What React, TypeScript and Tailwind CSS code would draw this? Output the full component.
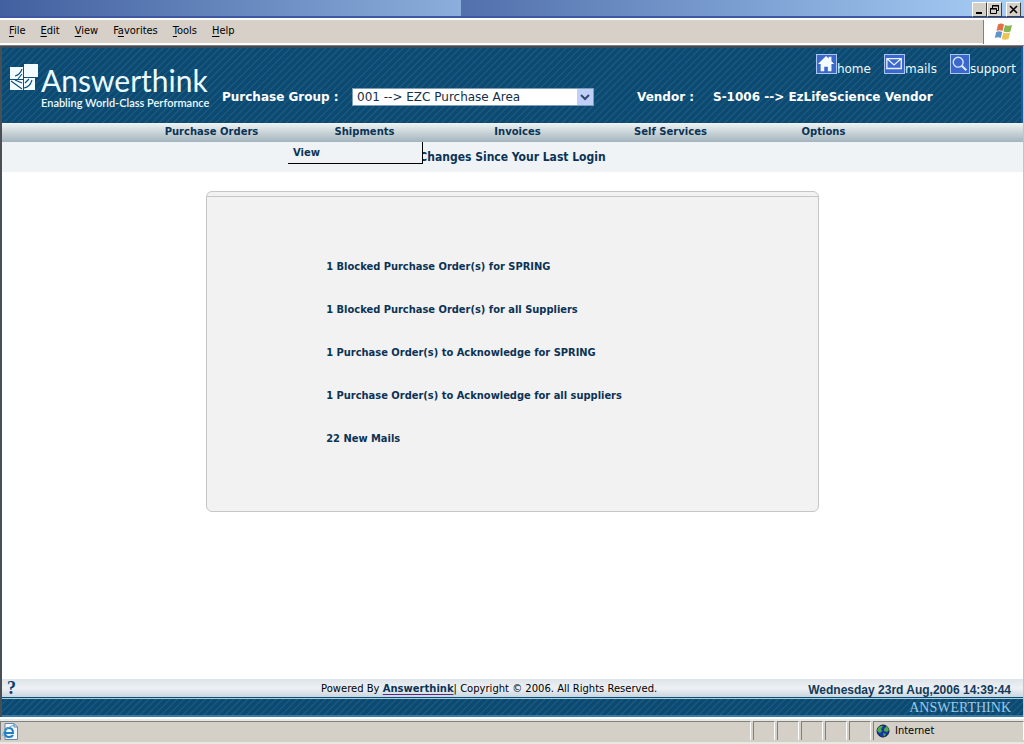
import React from "react";

const menuItems = [
  { pre: "", key: "F", post: "ile" },
  { pre: "", key: "E", post: "dit" },
  { pre: "", key: "V", post: "iew" },
  { pre: "F", key: "a", post: "vorites" },
  { pre: "", key: "T", post: "ools" },
  { pre: "", key: "H", post: "elp" },
];

const notices = [
  "1 Blocked Purchase Order(s) for SPRING",
  "1 Blocked Purchase Order(s) for all Suppliers",
  "1 Purchase Order(s) to Acknowledge for SPRING",
  "1 Purchase Order(s) to Acknowledge for all suppliers",
  "22 New Mails",
];

const hatch =
  "bg-[#0d4b73] bg-[repeating-linear-gradient(135deg,#0c4a73_0px,#0c4a73_3px,#1d5f80_4px,#0c4a73_5px)]";
const verdana = "font-['DejaVu_Sans',sans-serif]";
const tahoma = "font-['DejaVu_Sans_Condensed','DejaVu_Sans',sans-serif]";

function TitleBar() {
  const button =
    "flex h-[15px] w-[15px] items-center justify-center border border-t-white border-l-white border-r-[#404040] border-b-[#404040] bg-[#d4d0c8]";
  return (
    <div className="flex h-[18px] border-b-2 border-[#3d58a0] bg-gradient-to-r from-[#22398b] to-[#a9d0f7]">
      <div className="w-[45%] bg-gradient-to-r from-[#42609f] to-[#8caedb]" />
      <div className="flex flex-1 items-start justify-end bg-gradient-to-r from-[#5270ac] to-[#a9d0f7] pt-[2px] pr-[3px]">
        <button aria-label="Minimize" className={button}>
          <svg width="11" height="11"><path d="M2 9h6" stroke="#000" strokeWidth="2" /></svg>
        </button>
        <button aria-label="Restore" className={button}>
          <svg width="11" height="11" fill="none" stroke="#000">
            <path d="M3.500 4V1.500H9.500V6.500H8M3 2h7M1.500 4.500h6v5h-6zM1 5h7" />
          </svg>
        </button>
        <button aria-label="Close" className={button + " ml-[4px]"}>
          <svg width="11" height="11"><path d="M2 2l7 7M9 2l-7 7" stroke="#000" strokeWidth="1.600" /></svg>
        </button>
      </div>
    </div>
  );
}

function WindowsFlag() {
  return (
    <svg width="22" height="20" viewBox="0 0 22 20">
      <path d="M5 2.500Q8 .5 11 2.500L9.500 9Q6.500 7.500 3.500 9Z" fill="#e07048" />
      <path d="M12 3Q15 4.500 19 3L17.500 9.500Q14 11 10.500 9.500Z" fill="#86b552" />
      <path d="M3.200 10Q6 8.500 9.200 10L7.800 16Q5 14.500 1.800 16Z" fill="#5f93cc" />
      <path d="M10.200 10.500Q13.500 12 17.200 10.500L15.500 17Q12 18.500 8.800 17Z" fill="#ecc552" />
    </svg>
  );
}

function MenuBar() {
  return (
    <div className="flex h-[28px] items-stretch border-t-2 border-b border-t-white border-b-[#808080] bg-[#d6d0c8] shadow-[inset_0_-2px_0_#fff]">
      <nav className="flex flex-1 items-center gap-[15px] pb-[2px] pl-[9px] text-[11px] text-black">
        {menuItems.map((m) => (
          <button key={m.key} className={tahoma}>
            {m.pre}
            <span className="underline underline-offset-2">{m.key}</span>
            {m.post}
          </button>
        ))}
      </nav>
      <div className="mb-[1px] flex w-[41px] items-center justify-center border-l border-[#808080] bg-white">
        <WindowsFlag />
      </div>
    </div>
  );
}

function Logo() {
  return (
    <div className="flex w-[220px] shrink-0 items-start gap-[2px] pt-[16px] pl-[7px] font-['Lato',sans-serif] text-[#eafaff]">
      <svg width="30" height="28" viewBox="0 0 30 28" className="shrink-0">
        <path d="M15 0h14v13H15zM1 3h13v12H1zM1 16h13v10H1zM15 14h11v12H15z" fill="#f2fcff" />
        <path
          d="M6 12q5-1 7-7M9 15l4-5M2 17l11 8M6 16l7 3M15 24q6-1 8-8M16 19l4-4"
          fill="none"
          stroke="#0c4c75"
          strokeWidth="1.100"
        />
      </svg>
      <div>
        <div className="text-[30px] leading-[32px]">Answerthink</div>
        <div className="text-[11px] leading-[14px] font-semibold whitespace-nowrap">Enabling World-Class Performance</div>
      </div>
    </div>
  );
}

const iconFrame = "border border-[#a9c6f2] bg-[#3c68cc]";

function QuickLinks() {
  const link = "flex items-start";
  const text = "pt-[7px] text-[12px] leading-[16px]";
  return (
    <nav className={"flex justify-end gap-[13px] pt-[6px] pr-[5px] text-[#eef9fb] " + verdana}>
      <a href="#home" className={link}>
        <svg width="21" height="20" viewBox="0 0 21 20" className={iconFrame}>
          <path d="M10 1L1 10h3v8h4v-5h4v5h4v-8h3L16 7V2h-3v2z" fill="#f4fbff" />
        </svg>
        <span className={text}>home</span>
      </a>
      <a href="#mails" className={link}>
        <svg width="21" height="20" viewBox="0 0 21 20" className={iconFrame} fill="none" stroke="#e6f2ff" strokeWidth="1.500">
          <path d="M2 4h16v11H2zM2 4l8 7 8-7" />
        </svg>
        <span className={text}>mails</span>
      </a>
      <a href="#support" className={link}>
        <svg width="20" height="20" viewBox="0 0 20 20" className={iconFrame} fill="none" stroke="#d4e7ff" strokeWidth="1.500">
          <circle cx="8" cy="8" r="5.500" />
          <path d="M12 12l5 5" strokeWidth="2.500" />
        </svg>
        <span className={text}>support</span>
      </a>
    </nav>
  );
}

function Header() {
  return (
    <header className={"flex h-[77px] border-t-2 border-r-2 border-t-[#3e4a55] border-r-[#1c5aa0] text-white " + hatch}>
      <Logo />
      <div className="flex flex-1 flex-col">
        <QuickLinks />
        <div className={"mt-[11px] flex items-center text-[12px] font-bold whitespace-nowrap " + verdana}>
          <label htmlFor="group" className="w-[130px]">Purchase Group :</label>
          <div className="relative w-[242px]">
            <select
              id="group"
              className="block h-[18px] w-full appearance-none border border-[#7f9db9] bg-white pl-1 text-[12px] leading-[16px] font-normal text-[#12304a]"
            >
              <option>001 --&gt; EZC Purchase Area</option>
            </select>
            <svg width="16" height="16" className="pointer-events-none absolute top-[1px] right-[1px] bg-[#bfd0f8]">
              <path d="M4 6l4 4 4-4" fill="none" stroke="#35466f" strokeWidth="2" />
            </svg>
          </div>
          <span className="ml-[43px] w-[76px]">Vendor :</span>
          <span>S-1006 --&gt; EzLifeScience Vendor</span>
        </div>
      </div>
    </header>
  );
}

function MainNav() {
  const item = "flex-1 text-center";
  return (
    <nav
      className={
        "flex h-[19px] items-center bg-gradient-to-b from-[#f0f4f2] to-[#a3b4be] pr-[123px] pb-[2px] pl-[133px] text-[10px] leading-[15px] font-bold text-[#0b3355] " +
        verdana
      }
    >
      <a href="#orders" className={item}>Purchase Orders</a>
      <div className={"relative " + item}>
        <a href="#shipments">Shipments</a>
        <div className="absolute top-[18px] left-0 z-10 flex h-[22px] w-[135px] items-center border-r border-b border-black bg-[#eff3f5] pl-[5px]">
          <a href="#view">View</a>
        </div>
      </div>
      <a href="#invoices" className={item}>Invoices</a>
      <a href="#self" className={item}>Self Services</a>
      <a href="#options" className={item}>Options</a>
    </nav>
  );
}

function Footer() {
  return (
    <footer>
      <div
        className={
          "flex h-[19px] items-center justify-between border-b border-[#0d4b73] bg-gradient-to-b from-[#dde3e9] via-[#edf1f4] to-[#cbd6df] text-[10px] whitespace-nowrap text-black " +
          verdana
        }
      >
        <a href="#help" className="w-[168px] pl-[5px] font-['Liberation_Serif',serif] text-[18px] leading-[18px] font-bold text-[#0b3f68]">?</a>
        <p>
          Powered By <a href="#answerthink" className="font-bold text-[#0b3355] underline decoration-[#5a2a80] underline-offset-2">Answerthink</a>| Copyright © 2006. All Rights Reserved.
        </p>
        <time className="pt-[3px] pr-[12px] text-right font-['Liberation_Sans',sans-serif] text-[12px] font-bold text-[#123a5a]">
          Wednesday 23rd Aug,2006 14:39:44
        </time>
      </div>
      <div
        className={
          "h-[19px] border-t border-b-2 border-t-[#a6cfe0] border-b-[#3c7ba6] pr-[12px] text-right font-['Liberation_Serif',serif] text-[14px] leading-[17px] text-[#9cc9e6] " +
          hatch
        }
      >
        ANSWERTHINK
      </div>
    </footer>
  );
}

function StatusBar() {
  const cell = "border-t border-l border-[#808080] border-r-white border-r";
  return (
    <div className="mt-[2px] flex h-[25px] gap-[2px] border-t-2 border-b-2 border-[#e9e7e2] bg-[#d4d0c8] pb-[2px]">
      <div className={"flex flex-1 items-center pl-[1px] " + cell}>
        <svg width="16" height="17" viewBox="0 0 16 17">
          <path d="M3 .5h9l3.500 3.500v12.500H3z" fill="#f4f9ff" stroke="#6785b5" />
          <path d="M12 .5V4h3.500" fill="none" stroke="#6785b5" />
          <path d="M3 10h8q0-5-4-5t-4 4.500T7 14q3 0 4-2" fill="none" stroke="#1f7fc0" strokeWidth="2" />
          <path d="M1 13Q0 9 6 5t7-2" fill="none" stroke="#55a8dc" />
        </svg>
      </div>
      {[0, 1, 2, 3, 4].map((n) => (
        <div key={n} className={"w-[22px] " + cell} />
      ))}
      <div className={"flex w-[151px] items-center gap-[5px] pl-[2px] text-[11px] text-black " + cell + " " + tahoma}>
        <svg width="14" height="14" viewBox="0 0 14 14">
          <circle cx="7" cy="7" r="6" fill="#1736a5" stroke="#111a3c" />
          <path d="M2 4q2-3 5-2L5 5l1 2-2 2-3-2zM8 5l3-3 2 4-2 2-3-1zM7 9l3 1-2 3z" fill="#4cae4a" />
        </svg>
        Internet
      </div>
    </div>
  );
}

export default function App() {
  return (
    <div className="flex min-h-screen flex-col bg-white">
      <TitleBar />
      <MenuBar />
      <div className="flex flex-1 flex-col border-r border-l-2 border-r-[#c4c4c4] border-l-[#4a4f55]">
        <Header />
        <MainNav />
        <h1 className={"h-[30px] bg-[#eff3f5] text-center text-[12px] leading-[30px] font-bold text-[#0b3355] " + tahoma}>
          Changes Since Your Last Login
        </h1>
        <main className="flex-1 pt-[19px]">
          <section className="mx-auto w-3/5 rounded-md border border-[#c6c6c6] bg-[#f2f2f2] pt-[4px] pb-[51px]">
            <ul className={"border-t border-[#c6c6c6] pt-[48px] pl-[119px] text-[11px] font-bold text-[#0b3355] " + tahoma}>
              {notices.map((n) => (
                <li key={n} className="h-[43px] leading-[43px]">{n}</li>
              ))}
            </ul>
          </section>
        </main>
        <Footer />
      </div>
      <StatusBar />
    </div>
  );
}
